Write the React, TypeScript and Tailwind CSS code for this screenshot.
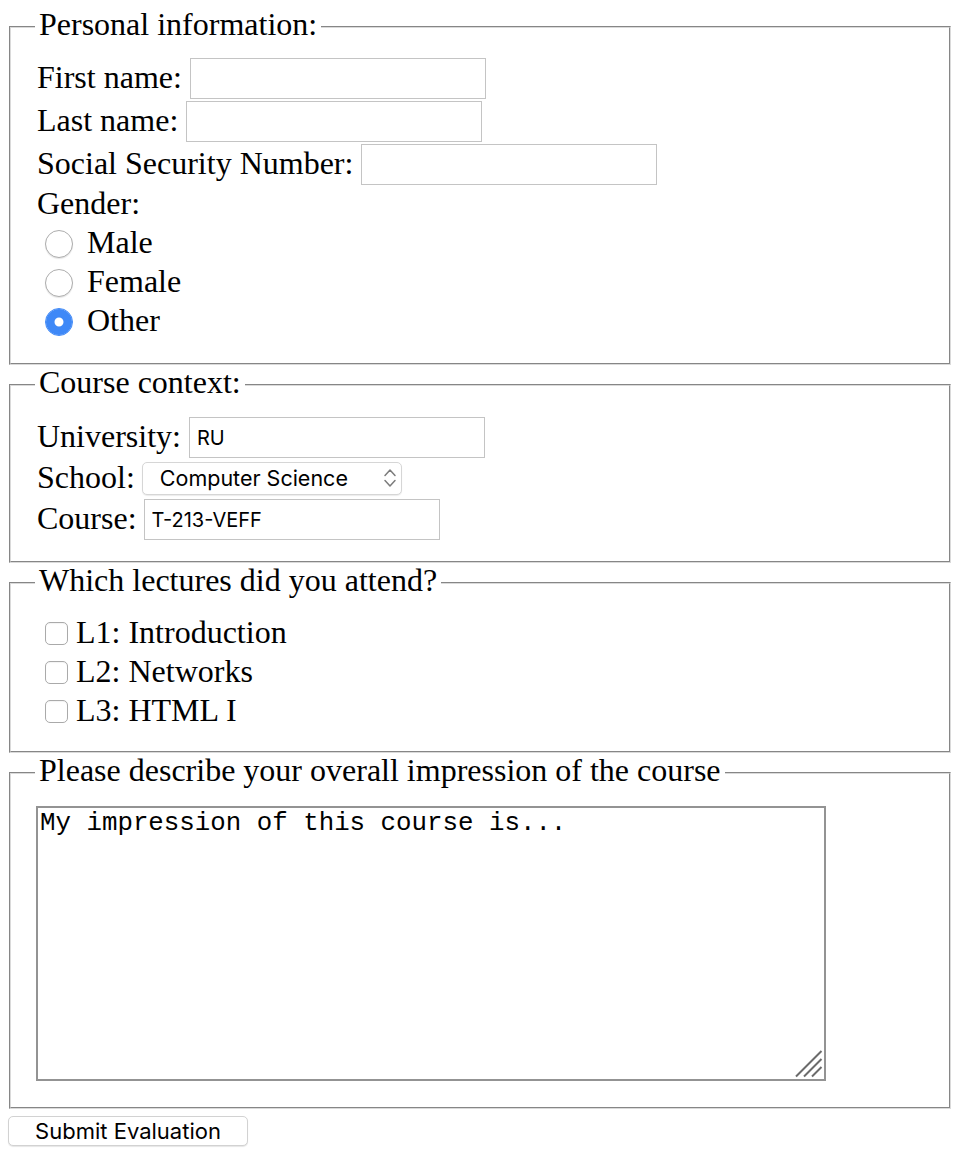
import React from "react";

const inputCls =
  "w-[296px] h-[41px] border border-[#c4c4c4] bg-white px-[7px] font-['Inter',sans-serif] text-[20px] text-black outline-none";

const fieldsetCls =
  "mx-[9px] border-2 [border-style:groove] border-[#dadada] px-[26px]";

const legendCls = "ml-[-2px] px-[4px] leading-[31px] pb-[5px]";

const radioCls =
  "appearance-none ml-[8px] mr-[14px] w-[28px] h-[28px] rounded-full border border-[#adadad] bg-white shadow-[0_1px_1px_rgba(0,0,0,0.1)] checked:border-[#3e88f7] checked:shadow-[inset_0_0_0_8.5px_#3e88f7]";

const checkCls =
  "appearance-none ml-[8px] mr-[8px] w-[23px] h-[23px] rounded-[5px] border border-[#aaaaaa] bg-white shadow-[inset_0_1px_1px_rgba(0,0,0,0.05)]";

const lectures = ["L1: Introduction", "L2: Networks", "L3: HTML I"];
const genders = ["Male", "Female", "Other"];

const CourseEvaluation = () => {
  return (
    <form
      onSubmit={(e) => e.preventDefault()}
      className="flex flex-col pt-[9px] min-h-[1158px] bg-white font-['Liberation_Serif',serif] text-[32px] text-black"
    >
      {/* personal */}
      <fieldset className={`${fieldsetCls} pt-[12px] pb-[22px]`}>
        <legend className={legendCls}>Personal information:</legend>
        <div className="flex items-center h-[43px] gap-[8px]">
          <span className="pb-[4px]">First name:</span>
          <input type="text" className={inputCls} />
        </div>
        <div className="flex items-center h-[43px] gap-[8px]">
          <span className="pb-[4px]">Last name:</span>
          <input type="text" className={inputCls} />
        </div>
        <div className="flex items-center h-[43px] gap-[8px]">
          <span className="pb-[4px]">Social Security Number:</span>
          <input type="text" className={inputCls} />
        </div>
        <div className="flex items-center h-[37px]">
          <span className="pb-[4px]">Gender:</span>
        </div>
        <div className="mt-[1px]">
          {genders.map((g) => (
            <label key={g} className="flex items-center h-[39px]">
              <input
                type="radio"
                name="gender"
                defaultChecked={g === "Other"}
                className={radioCls}
              />
              <span className="pb-[4px]">{g}</span>
            </label>
          ))}
        </div>
      </fieldset>

      {/* course */}
      <fieldset className={`${fieldsetCls} mt-[2px] pt-[13px] pb-[20px]`}>
        <legend className={legendCls}>Course context:</legend>
        <div className="flex items-center h-[43px] gap-[8px]">
          <span className="pb-[4px]">University:</span>
          <input type="text" defaultValue="RU" className={inputCls} />
        </div>
        <div className="flex items-center h-[39px] gap-[7px]">
          <span className="pb-[4px]">School:</span>
          <div className="relative flex">
            <select
              defaultValue="cs"
              className="block appearance-none w-[260px] h-[33px] rounded-[5px] border border-[#d6d6d6] bg-white pl-[17px] font-['Inter',sans-serif] text-[21.5px] leading-[31px] text-black shadow-[0_1px_1px_rgba(0,0,0,0.08)] outline-none"
            >
              <option value="cs">Computer Science</option>
              <option value="eng">Engineering</option>
              <option value="bus">Business</option>
            </select>
            <svg
              className="absolute right-[5px] top-[6px] pointer-events-none"
              width="14"
              height="20"
              viewBox="0 0 14 20"
              fill="none"
              stroke="#7c7c7c"
              strokeWidth="1.5"
              strokeLinecap="round"
              strokeLinejoin="round"
            >
              <path d="M2 7.5 L7 2 L12 7.5" />
              <path d="M2 12.5 L7 18 L12 12.5" />
            </svg>
          </div>
        </div>
        <div className="flex items-center h-[43px] gap-[7px]">
          <span className="pb-[4px]">Course:</span>
          <input type="text" defaultValue="T-213-VEFF" className={inputCls} />
        </div>
      </fieldset>

      {/* lectures */}
      <fieldset className={`${fieldsetCls} mt-[2px] pt-[13px] pb-[20px]`}>
        <legend className={legendCls}>Which lectures did you attend?</legend>
        {lectures.map((l) => (
          <label key={l} className="flex items-center h-[39px]">
            <input type="checkbox" className={checkCls} />
            <span className="pb-[4px]">{l}</span>
          </label>
        ))}
      </fieldset>

      {/* impression */}
      <fieldset className={`${fieldsetCls} mt-[2px] pt-[13px] pb-[26px]`}>
        <legend className={legendCls}>
          Please describe your overall impression of the course
        </legend>
        <div className="relative ml-[-1px] mt-[2px] w-[790px] h-[275px]">
          <textarea
            defaultValue="My impression of this course is..."
            className="block w-full h-full resize-none border-2 border-[#939393] bg-white px-[2px] pt-[1px] font-['Liberation_Mono',monospace] text-[25.8px] leading-[30px] text-black outline-none"
          />
          <svg
            className="absolute right-[3px] bottom-[3px] pointer-events-none"
            width="28"
            height="28"
            viewBox="0 0 28 28"
            stroke="#6b6b6b"
            strokeWidth="2"
          >
            <path d="M26.5 1 L1 26.5" />
            <path d="M26.5 9 L9 26.5" />
            <path d="M26.5 17 L17 26.5" />
          </svg>
        </div>
      </fieldset>

      <button
        type="submit"
        className="self-start ml-[8px] mt-[7px] w-[240px] h-[30px] rounded-[5px] border border-[#d2d2d2] bg-white shadow-[0_1px_1px_rgba(0,0,0,0.1)] font-['Inter',sans-serif] text-[22px] leading-none text-black"
      >
        Submit Evaluation
      </button>
    </form>
  );
};

export default function App() {
  return <CourseEvaluation />;
}
